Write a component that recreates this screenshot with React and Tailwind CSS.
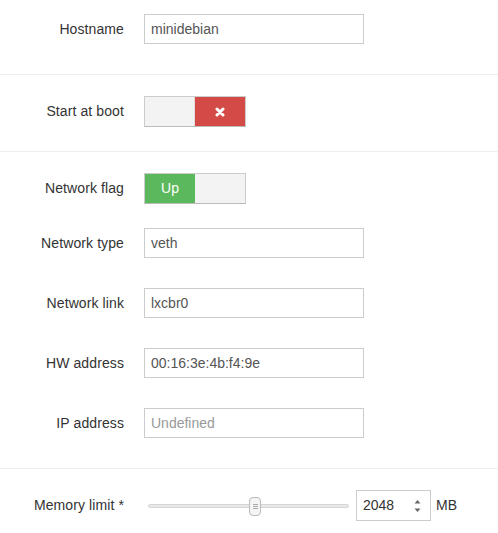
import React from "react";

const font = { fontFamily: '"Liberation Sans", Arial, sans-serif' };

function Row({ label, children, className = "" }) {
  return (
    <div className={"flex items-center " + className}>
      <label className="w-[124px] shrink-0 text-right text-[14px] tracking-[0.1px] text-[#333]">{label}</label>
      <div className="ml-[20px] flex items-center">{children}</div>
    </div>
  );
}

function TextInput({ value, placeholder }) {
  return (
    <input
      readOnly
      value={value || ""}
      placeholder={placeholder}
      className="h-[30px] w-[220px] border border-[#ccc] bg-white px-[6px] text-[14px] text-[#555] placeholder:text-[#999] outline-none"
    />
  );
}

function Toggle({ on }) {
  return (
    <div className="flex h-[31px] w-[102px] border border-[#ccc] border-b-[#bbb]">
      {on ? (
        <>
          <div className="flex w-1/2 items-center justify-center bg-[#5cb85c] text-[14px] text-white">Up</div>
          <div className="w-1/2 bg-[#f3f3f3]" />
        </>
      ) : (
        <>
          <div className="w-1/2 border-r border-[#ddd] bg-[#f3f3f3]" />
          <div className="flex w-1/2 items-center justify-center bg-[#d44a46]">
            <svg width="10" height="10" viewBox="0 0 10 10">
              <path d="M2 2 L8 8 M8 2 L2 8" stroke="#fff" strokeWidth="3" strokeLinecap="round" />
            </svg>
          </div>
        </>
      )}
    </div>
  );
}

export default function App() {
  return (
    <div className="h-[533px] w-[498px] overflow-hidden bg-white" style={font}>
      <section className="border-b border-[#eee] pt-[14px] pb-[30px]">
        <Row label="Hostname">
          <TextInput value="minidebian" />
        </Row>
      </section>

      <section className="border-b border-[#eee] pt-[21px] pb-[24px]">
        <Row label="Start at boot">
          <Toggle on={false} />
        </Row>
      </section>

      <section className="border-b border-[#eee] pt-[21px] pb-[30px]">
        <Row label="Network flag">
          <Toggle on />
        </Row>
        <Row label="Network type" className="mt-[24px]">
          <TextInput value="veth" />
        </Row>
        <Row label="Network link" className="mt-[30px]">
          <TextInput value="lxcbr0" />
        </Row>
        <Row label="HW address" className="mt-[30px]">
          <TextInput value="00:16:3e:4b:f4:9e" />
        </Row>
        <Row label="IP address" className="mt-[30px]">
          <TextInput placeholder="Undefined" />
        </Row>
      </section>

      <section className="pt-[21px]">
        <div className="flex items-center">
          <label className="w-[124px] shrink-0 text-right text-[14px] tracking-[0.1px] text-[#333]">Memory limit *</label>
          <div className="relative ml-[24px] flex h-[30px] w-[201px] items-center">
            <div className="h-[4px] w-full rounded-full border border-[#d6d6d6] bg-[#e8e8e8]" />
            <div className="absolute left-[101px] top-[6px] flex h-[19px] w-[12px] flex-col items-center justify-center gap-[1px] rounded-[4px] border border-[#bbb] bg-[#f4f4f4]">
              <span className="h-px w-[5px] bg-[#aaa]" />
              <span className="h-px w-[5px] bg-[#aaa]" />
              <span className="h-px w-[5px] bg-[#aaa]" />
            </div>
          </div>
          <div className="ml-[7px] flex h-[31px] w-[75px] items-center border border-[#ccc] bg-white pl-[6px] pr-[9px] text-[14px] text-[#333]">
            <span className="flex-1">2048</span>
            <svg width="7" height="14" viewBox="0 0 7 14">
              <path d="M3.5 1 L6.5 4.5 L0.5 4.5 Z" fill="#666" />
              <path d="M3.5 13 L6.5 9.5 L0.5 9.5 Z" fill="#666" />
            </svg>
          </div>
          <span className="ml-[5px] text-[14px] text-[#333]">MB</span>
        </div>
      </section>
    </div>
  );
}
